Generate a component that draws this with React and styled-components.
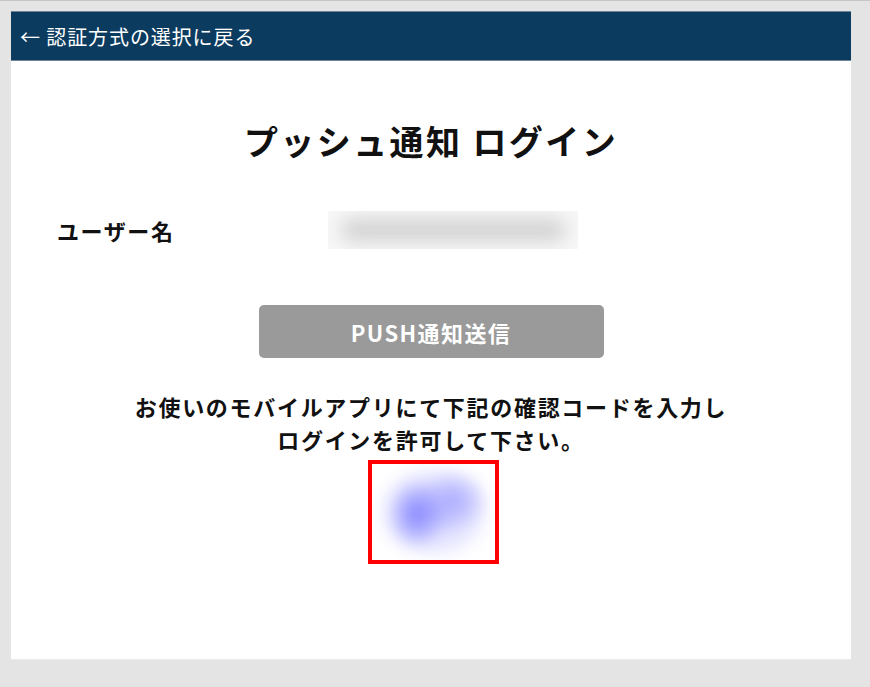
import { createGlobalStyle, styled } from "styled-components";

const GlobalStyle = createGlobalStyle`
  html, body {
    margin: 0;
    padding: 0;
  }
  body {
    background-color: #e4e4e4;
    border-top: 1px solid #c6c6c6;
    font-family: "Noto Sans CJK JP", "Noto Sans", sans-serif;
  }
`;

const App = () => {
  return (
    <>
      <GlobalStyle />
      <Page>
        <Panel>
          <Header>
            <BackLink>← 認証方式の選択に戻る</BackLink>
          </Header>
          <Body>
            <Title>プッシュ通知 ログイン</Title>
            <UserRow>
              <Label>ユーザー名</Label>
              <MaskedValue>
                <MaskBar />
              </MaskedValue>
            </UserRow>
            <PushButton type="button">PUSH通知送信</PushButton>
            <Guide>
              お使いのモバイルアプリにて下記の確認コードを入力し
              <br />
              ログインを許可して下さい。
            </Guide>
            <CodeFrame>
              <CodeBlur />
            </CodeFrame>
          </Body>
        </Panel>
      </Page>
    </>
  );
};

export default App;

const Page = styled.div`
  padding: 10px 0 0 11px;
  height: 676px;
  box-sizing: border-box;
`;

const Panel = styled.div`
  width: 840px;
  height: 648px;
  background-color: #ffffff;
  border-bottom: 1px solid #ececec;
  display: flex;
  flex-direction: column;
`;

const Header = styled.div`
  height: 50px;
  box-sizing: border-box;
  background-color: #0b3b5e;
  border-top: 1px solid #6f8596;
  border-bottom: 1px solid #6f8596;
  display: flex;
  align-items: center;
  padding-left: 9px;
`;

const BackLink = styled.span`
  color: #ffffff;
  font-size: 20px;
  letter-spacing: 0.9px;
  cursor: pointer;
`;

const Body = styled.div`
  display: flex;
  flex-direction: column;
  align-items: center;
  padding-top: 56px;
`;

const Title = styled.h1`
  margin: 0;
  height: 48px;
  line-height: 48px;
  font-size: 34px;
  font-weight: 700;
  color: #111111;
  letter-spacing: 2.4px;
`;

const UserRow = styled.div`
  align-self: stretch;
  display: grid;
  grid-template-columns: 271px 250px;
  align-items: center;
  padding-left: 46px;
  margin-top: 46px;
  height: 38px;
`;

const Label = styled.span`
  font-size: 22px;
  font-weight: 700;
  color: #111111;
  letter-spacing: 1.6px;
`;

const MaskedValue = styled.div`
  height: 38px;
  background-color: #f7f7f7;
  overflow: hidden;
  display: flex;
  align-items: center;
  justify-content: center;
`;

const MaskBar = styled.div`
  width: 225px;
  height: 22px;
  background-color: #d2d2d2;
  border-radius: 11px;
  filter: blur(9px);
`;

const PushButton = styled.button`
  margin-top: 56px;
  width: 345px;
  height: 53px;
  border: none;
  border-radius: 5px;
  background-color: #9a9a9a;
  color: #ffffff;
  font-family: "Noto Sans CJK JP", "Noto Sans", sans-serif;
  font-size: 22px;
  font-weight: 700;
  letter-spacing: 1.4px;
  cursor: pointer;
`;

const Guide = styled.p`
  margin: 32px 0 0;
  text-align: center;
  font-size: 22px;
  font-weight: 700;
  line-height: 33px;
  letter-spacing: 1.7px;
  color: #111111;
`;

const CodeFrame = styled.div`
  margin: 4px 0 0 4px;
  width: 131px;
  height: 104px;
  box-sizing: border-box;
  border: 4px solid #ff0000;
  background-color: #ffffff;
  overflow: hidden;
  position: relative;
`;

const CodeBlur = styled.div`
  position: absolute;
  inset: 0;
  background:
    radial-gradient(ellipse 30px 36px at 36% 52%, #8888ff 0%, rgba(136, 136, 255, 0) 100%),
    radial-gradient(ellipse 36px 32px at 66% 38%, #acacff 0%, rgba(172, 172, 255, 0) 100%),
    radial-gradient(ellipse 60px 50px at 50% 50%, #c2c2ff 0%, rgba(228, 228, 255, 0.55) 80%, rgba(255, 255, 255, 0) 100%);
  filter: blur(6px);
`;
